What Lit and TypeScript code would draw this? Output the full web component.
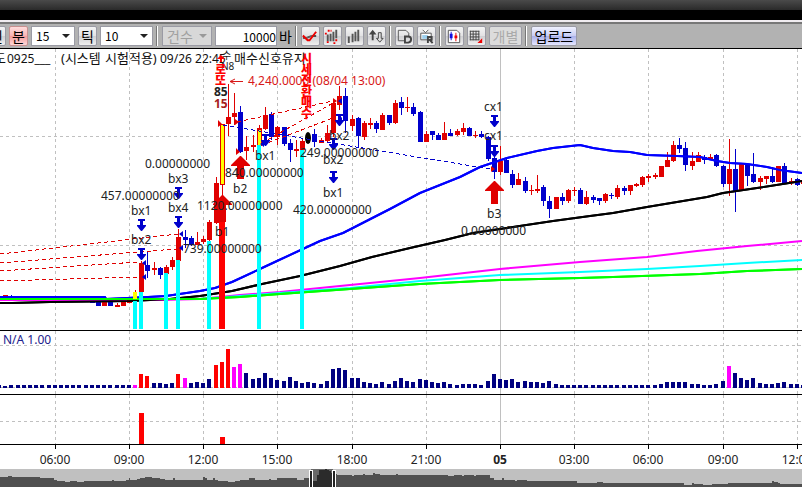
import { LitElement, css, html, svg } from "lit";
import { customElement } from "lit/decorators.js";

/** x of the n-th 15-minute bar; bar 0 is 06:00. */
const barX = (i: number) => Math.floor(55.25 + 6.183 * i);

// index, colour, body top, body bottom, wick top, wick bottom
type Candle = [number, "r" | "b", number, number, number, number];
const CANDLES: Candle[] = [
  [-8, "r", 295, 297, 295, 297], [-7, "b", 296, 298, 295, 298], [-5, "r", 296, 298, 296, 298],
  [-3, "r", 296, 298, 296, 298], [0, "r", 296, 298, 296, 298], [3, "r", 296, 298, 296, 298],
  [6, "b", 302, 303, 302, 303], [7, "b", 302, 306, 302, 306], [8, "r", 302, 306, 302, 306],
  [9, "b", 302, 306, 302, 306], [10, "r", 305, 307, 303, 307], [11, "r", 302, 306, 302, 306],
  [12, "r", 297, 303, 297, 303], [14, "r", 263, 292, 261, 292], [15, "b", 265, 271, 252, 278],
  [16, "r", 268, 270, 262, 275], [17, "b", 268, 275, 267, 279], [18, "r", 267, 274, 265, 274],
  [19, "r", 260, 267, 257, 270], [20, "r", 237, 261, 229, 261], [21, "b", 237, 240, 230, 248],
  [22, "b", 238, 245, 236, 246], [23, "r", 242, 245, 232, 245], [24, "r", 239, 242, 236, 244],
  [25, "r", 222, 240, 220, 241], [26, "r", 183, 223, 177, 224], [28, "r", 117, 124, 84, 136],
  [29, "r", 113, 117, 93, 125], [30, "b", 112, 152, 106, 153], [31, "r", 147, 151, 136, 160],
  [32, "r", 145, 147, 135, 152], [34, "r", 115, 129, 107, 130], [35, "b", 114, 137, 112, 140],
  [36, "r", 127, 137, 126, 145], [37, "b", 127, 144, 127, 146], [38, "b", 143, 150, 139, 162],
  [39, "r", 149, 151, 140, 157], [40, "r", 141, 150, 138, 150], [42, "b", 134, 142, 129, 147],
  [43, "r", 140, 143, 138, 143], [44, "r", 133, 141, 125, 142], [45, "r", 103, 133, 101, 137],
  [46, "r", 96, 105, 86, 110], [47, "b", 96, 121, 88, 133], [48, "r", 119, 126, 115, 131],
  [49, "b", 118, 136, 117, 148], [50, "r", 123, 137, 121, 140], [51, "r", 123, 125, 118, 129],
  [52, "b", 123, 129, 121, 133], [53, "r", 115, 130, 113, 130], [54, "b", 115, 123, 115, 125],
  [55, "r", 103, 123, 100, 124], [56, "b", 102, 108, 97, 115], [57, "r", 107, 108, 97, 112],
  [58, "b", 107, 114, 103, 116], [59, "b", 112, 142, 111, 142], [60, "r", 134, 142, 131, 142],
  [61, "b", 131, 135, 131, 140], [62, "b", 135, 140, 133, 140], [63, "r", 133, 140, 122, 140],
  [64, "b", 133, 136, 129, 136], [65, "r", 131, 135, 129, 136], [66, "r", 128, 132, 123, 135],
  [67, "b", 128, 136, 127, 136], [68, "r", 135, 136, 131, 138], [69, "b", 134, 137, 131, 138],
  [70, "b", 137, 159, 136, 161], [71, "b", 158, 172, 157, 179], [72, "r", 161, 172, 146, 175],
  [73, "b", 160, 173, 158, 173], [74, "b", 174, 185, 170, 188], [75, "r", 179, 185, 173, 185],
  [76, "b", 181, 191, 177, 193], [77, "r", 190, 191, 185, 195], [78, "r", 189, 191, 175, 193],
  [79, "b", 187, 201, 185, 206], [80, "b", 201, 209, 196, 218], [81, "r", 197, 209, 197, 209],
  [82, "b", 197, 201, 193, 205], [83, "r", 190, 201, 189, 203], [84, "r", 190, 191, 187, 196],
  [85, "b", 190, 204, 188, 204], [86, "r", 197, 204, 191, 205], [87, "b", 197, 200, 195, 203],
  [88, "b", 198, 201, 198, 205], [89, "r", 194, 201, 193, 203], [90, "b", 195, 196, 193, 199],
  [91, "r", 188, 197, 185, 199], [92, "b", 188, 191, 186, 195], [93, "r", 185, 191, 185, 195],
  [94, "r", 184, 186, 183, 187], [95, "r", 177, 185, 176, 187], [96, "r", 176, 178, 174, 182],
  [97, "r", 175, 177, 173, 179], [98, "r", 166, 177, 166, 177], [99, "r", 160, 167, 152, 167],
  [100, "r", 145, 161, 141, 162], [101, "b", 145, 149, 138, 153], [102, "b", 148, 165, 142, 171],
  [103, "r", 161, 166, 152, 170], [104, "r", 155, 162, 152, 162], [105, "b", 157, 160, 155, 164],
  [106, "r", 157, 159, 154, 160], [107, "b", 155, 166, 154, 167], [108, "b", 166, 184, 165, 187],
  [109, "r", 169, 184, 139, 196], [110, "b", 169, 191, 149, 212], [111, "r", 164, 190, 163, 190],
  [112, "b", 165, 176, 164, 186], [113, "b", 174, 182, 153, 183], [114, "r", 178, 182, 176, 190],
  [115, "r", 176, 179, 176, 184], [116, "b", 176, 182, 167, 183], [117, "r", 166, 182, 166, 182],
  [118, "b", 166, 183, 163, 184], [119, "r", 181, 182, 178, 185], [120, "b", 179, 185, 178, 186],
  [121, "r", 180, 184, 180, 184],
];

// bar heights, starting with bar -9
const VOLUME = [
  3, 2, 3, 3, 3, 3, 3, 3, 3, 3, 3, 3, 3, 3, 3, 3, 3, 3, 3, 3, 3, 3, 3, 14, 12, 5, 5, 4, 5, 14, 10, 5, 6, 5, 9,
  23, 26, 39, 21, 24, 15, 9, 10, 15, 10, 8, 7, 11, 7, 5, 6, 5, 4, 7, 19, 20, 18, 10, 10, 6, 5, 4, 6, 4, 7, 10,
  7, 6, 9, 8, 6, 5, 6, 4, 3, 4, 4, 4, 3, 7, 14, 9, 8, 9, 6, 7, 6, 6, 5, 7, 4, 3, 3, 3, 3, 3, 3, 3, 3, 3, 3, 3,
  3, 3, 3, 3, 3, 4, 6, 6, 6, 6, 4, 4, 3, 3, 4, 7, 22, 15, 10, 8, 10, 5, 4, 4, 5, 6, 4, 4, 3,
];
const RED_VOLUME = new Set([14, 15, 20, 26, 27, 28]);
const PINK_VOLUME = new Set([13, 21, 29, 30, 109]);
const volumeFill = (i: number) => (RED_VOLUME.has(i) ? "#ff0000" : PINK_VOLUME.has(i) ? "#ff00ff" : "#000080");

const AVERAGES: [string, string][] = [
  ["#000000", "0,303 12,303 50,302 130,301 170,299 200,296 232,291 262,284 300,276 340,266 372,257 410,248 445,240 473,233 513,227 553,221 590,216 613,213 647,207 677,202 707,197 723,193 757,188 802,181"],
  ["#0000ff", "0,297 105,297 106,299 148,297 166,296 200,291 215,288 232,282 262,268 277,261 305,248 320,241 343,233 390,209 420,193 460,177 480,167 507,158 537,151 553,148 580,145 593,148 613,151 630,152 647,155 677,156 700,157 717,161 730,163 747,164 767,167 780,170 802,173"],
  ["#ff00ff", "0,300 160,300 200,299 240,295 280,292 350,285 420,278 500,269 580,262 647,257 697,251 747,246 802,241"],
  ["#00ffff", "200,299 240,296 280,293 350,288 420,281 500,275 580,272 647,269 700,266 747,263 802,260"],
  ["#00ff00", "0,299 200,299 240,297 280,294 350,289 420,284 500,280 580,278 613,277 700,274 747,271 802,269"],
];

const HOURS: [number, string][] = [
  [55, "06:00"], [129, "09:00"], [203, "12:00"], [277, "15:00"], [352, "18:00"], [426, "21:00"],
  [500, "05"], [574, "03:00"], [648, "06:00"], [723, "09:00"], [797, "12:00"],
];

const BANDS: [number, number][] = [[133, 301], [139, 292], [164, 273], [176, 260], [207, 241], [257, 145], [300, 150]];
const DOWN: [number, number][] = [
  [141, 219], [141, 248], [178, 187], [178, 216], [265, 134], [339, 114], [333, 138], [333, 171], [494, 115], [494, 145],
];
const UP: [number, number, number][] = [[222, 195, 222], [240, 156, 179], [494, 181, 204]];

// x, baseline, text
const LABELS: [number, number, string][] = [
  [145, 168, "0.00000000"], [168, 183, "bx3"], [101, 200, "457.00000000"], [168, 212, "bx4"],
  [131, 215, "bx1"], [131, 244, "bx2"], [183, 253, "739.00000000"], [197, 210, "1120.00000000"],
  [225, 177, "840.00000000"], [233, 193, "b2"], [215, 236, "b1"], [255, 160, "bx1"],
  [329, 140, "bx2"], [300, 157, "249.00000000"], [323, 164, "bx2"], [323, 197, "bx1"],
  [293, 214, "420.00000000"], [484, 111, "cx1"], [484, 140, "cx1"], [487, 218, "b3"], [461, 235, "0.00000000"],
];

const RED_LINKS = [
  "M0 254L178 234", "M0 263L176 249", "M0 271L138 262", "M0 281L137 277",
  "M237 122L333 101", "M262 143L333 103", "M262 145L333 118",
];
const BLUE_LINKS = ["M223 125L313 140", "M320 141L490 169"];

const gridColumns = (top: number, bottom: number) =>
  HOURS.map(([x, t]) => svg`<path class=${t === "05" ? "day" : "grid"} d="M${x + 0.5} ${top}V${bottom}"/>`);

@customElement("price-chart")
class PriceChart extends LitElement {
  static styles = css`
    :host { display: block; background: #fff; }
    svg { display: block; width: 100%; height: auto; }
    text { font-family: "Noto Sans", "Noto Sans CJK KR", sans-serif; font-size: 12px; fill: #222; }
    .grid { stroke: #c0c0c0; stroke-dasharray: 3 3; fill: none; }
    .day { stroke: #c0c0c0; fill: none; }
    .frame { stroke: #000; fill: none; }
    .average { fill: none; stroke-width: 2; stroke-linejoin: round; shape-rendering: geometricPrecision; }
    .crisp { shape-rendering: crispEdges; }
    .link { fill: none; stroke-dasharray: 4 3; }
    .title { font-size: 13px; fill: #111; }
    .latin { font-size: 12px; }
    .high { fill: #d81818; }
    .bold { font-weight: 700; }
    .small { font-size: 10px; }
    .brown { fill: #a52020; }
    .signal { font-size: 12px; font-weight: 900; fill: #f00; }
    .study { fill: #20208c; }
    .middle { text-anchor: middle; }
  `;

  private prices() {
    return svg`
      <g class="crisp">
        ${gridColumns(49, 330)}
        <path class="grid" d="M0 136.5H802M0 245.5H802"/>
        ${AVERAGES.map(([c, p]) => svg`<polyline class="average" stroke=${c} points=${p}/>`)}
        ${CANDLES.map(([i, c, top, bottom, high, low]) => {
          const x = barX(i);
          return svg`<path fill=${c === "r" ? "#e00000" : "#0000cc"}
            d="M${x - 2} ${top}h5V${bottom}h-5zM${x} ${high}h1V${low}h-1z"/>`;
        })}
        ${AVERAGES.slice(0, 2).map(([c, p]) => svg`<polyline class="average" stroke=${c} points=${p}/>`)}
        ${AVERAGES.slice(4).map(([c, p]) => svg`<polyline class="average" stroke=${c} points=${p}/>`)}
        <path fill="#e00000" d="M135 290h1v9h-1zM220 124h5v61h-5zM222 184h1v14h-1zM257 128h5v18h-5zM259 125h1v4h-1z"/>
        <path fill="#ffff00" d="M133 292h4v7h-4zM221 125h3v59h-3zM258 130h3v15h-3z"/>
        ${BANDS.map(([x, y]) => svg`<rect fill="#00ffff" x=${x} y=${y} width="4" height=${329 - y}/>`)}
        <rect fill="#ff0000" x="219" y="222" width="6" height="107"/>
      </g>
      <ellipse cx="308" cy="138" rx="3" ry="6"/>
      <g class="crisp">
        ${RED_LINKS.map((d) => svg`<path class="link" stroke="#e00000" d=${d}/>`)}
        ${BLUE_LINKS.map((d) => svg`<path class="link" stroke="#0000cc" d=${d}/>`)}
      </g>
      ${DOWN.map(([x, y]) => svg`<path fill="#0000cc"
        d="M${x - 3} ${y}h7v2h-2v4h3v1l-4 5h-1l-4 -5v-1h3v-4h-2z"/>`)}
      ${UP.map(([x, y, end]) => svg`<path fill="#e00000"
        d="M${x} ${y}h1l9 9v1h-6V${end}h-7V${y + 10}h-6v-1z"/>`)}
      <path fill="#0000cc" d="M146 260v6l-4-3zM146 274v6l-4-3zM183 231v6l-4-3zM183 245v6l-4-3zM342 98v6l-4-3zM342 117v6l-4-3zM264 141v6l-4-3z"/>
      <path fill="#e00000" d="M218 120v7l4-3zM236 148v7l4-3zM491 166v6l4-3zM333 98v6l4-3zM235 119v6l4-3z"/>
      ${LABELS.map(([x, y, t]) => svg`<text x=${x} y=${y}>${t}</text>`)}
      <text class="title" x="-6" y="63">도<tspan class="latin" x="7">0925___</tspan><tspan x="61">(시스템</tspan><tspan x="105">시험적용)</tspan><tspan class="latin" x="160">09/26 22:45</tspan><tspan x="234">매수신호유지</tspan></text>
      <text class="small" x="222" y="59">수</text>
      <text class="small" x="221" y="70">N8</text>
      <path d="M243 81.500H230M235 79L230 81.500L235 84" fill="none" stroke="#d81818"/>
      <text class="high" x="248" y="85">4,240.0000 (08/04 13:00)</text>
      ${["로", "또"].map((t, i) => svg`<text class="signal" x="215" y=${74 + i * 11}>${t}</text>`)}
      <path fill="#ff0000" d="M221 55l4 4h-3v3h-2v-3h-3z"/>
      <text class="bold" x="214" y="96">85</text>
      <text class="bold brown" x="214" y="108">15</text>
      ${[..."시세전환매수"].map((t, i) => svg`<text class="signal" x="301" y=${63 + i * 11}>${t}</text>`)}
    `;
  }

  private volume() {
    return svg`
      <g class="crisp">
        <path class="frame" d="M0 330.5H802M0 394.5H802"/>
        ${gridColumns(331, 394)}
        <path class="grid" d="M0 345.5H802M0 387.5H802"/>
        ${VOLUME.map((h, n) => svg`<rect fill=${volumeFill(n - 9)} x=${barX(n - 9) - 2} y=${388 - h} width="4" height=${h}/>`)}
      </g>
      <text class="study" x="3" y="344">N/A 1.00</text>
    `;
  }

  private signals() {
    return svg`
      <g class="crisp">
        ${gridColumns(395, 444)}
        <path class="grid" d="M0 421.5H802"/>
        <path fill="#ff0000" d="M139 413h5v31h-5zM220 437h5v7h-5z"/>
        <path class="frame" d="M0 444.5H802"/>
        ${HOURS.map(([x]) => svg`<path class="frame" d="M${x + 0.5} 445v4"/>`)}
      </g>
      ${HOURS.map(([x, t]) => svg`<text class=${t === "05" ? "middle bold" : "middle"} x=${x} y="464">${t}</text>`)}
    `;
  }

  render() {
    return html`
      <svg viewBox="0 49 802 281" role="img" aria-label="가격">${this.prices()}</svg>
      <svg viewBox="0 330 802 65" role="img" aria-label="거래량">${this.volume()}</svg>
      <svg viewBox="0 395 802 74" role="img" aria-label="신호">${this.signals()}</svg>
    `;
  }
}

@customElement("range-navigator")
class RangeNavigator extends LitElement {
  static styles = css`
    :host { display: block; background: #c0c0c0; }
    svg { display: block; width: 100%; height: auto; shape-rendering: crispEdges; }
  `;

  render() {
    return html`<svg viewBox="0 469 802 18" role="img" aria-label="전체 기간">
      <path fill="#505050" d="M0 487V477H8V476H12V477H40V478H54V480H57V481H65V482H70V481H77V482H84V481H112V480H114V481H126V480H129V478H130V480H137V479H140V478H145V477H152V478H160V479H165V480H173V478H175V480H203V477H205V478H207V480H213V478H215V480H218V481H228V482H235V481H240V480H249V478H255V480H269V479H271V480H277V478H297V480H304V478H309V475H336V474H337V475H352V476H354V475H363V474H365V475H373V473H375V474H380V475H396V474H398V475H448V476H454V475H462V476H464V475H474V476H476V475H490V478H494V480H502V478H504V480H515V481H517V480H527V481H577V483H597V482H603V483H684V485H692V483H694V484H703V485H712V484H728V483H772V481H774V482H778V483H780V484H802V487Z"/>
      <rect x="311" y="469" width="22" height="18" fill="#686868"/>
      <path fill="#2b2b2b" d="M311 487V481H317V475H319V470H325V469H327V470H329V471H331V473H333V487Z"/>
      <path fill="#222" stroke="#fff" d="M309.500 470.500h3v20h-3zM332.500 470.500h3v20h-3z"/>
    </svg>`;
  }
}

const ICONS = {
  cross: svg`<path d="M2 11h4l5-2h5M2 12h4l5-2h5" fill="none" stroke="#444" stroke-width="1"/><path d="M2 9l5 5h2l7-9" fill="none" stroke="#e00" stroke-width="2"/>`,
  marked: svg`<path d="M4 8h2v7H4zM7 7h2v8H7zM10 5h2v10h-2zM13 3h2v9h-2z" fill="#555"/><path d="M5 3h2v2H5zM2 6h2v2H2zM8 3h1v2H8zM4 15h2v2H4zM11 16h2v2h-2zM13 13h2v2h-2z" fill="#e00"/>`,
  bars: svg`<path d="M3 10h2v7H3zM7 7h2v9H7zM10 5h2v10h-2zM13 3h2v12h-2z" fill="#555"/>`,
  swap: svg`<path d="M6 3l4 5H7v6H5V8H2z" fill="#444"/><path d="M12 6h3v6h2l-3.500 4L10 12h2z" fill="#ddd" stroke="#444"/>`,
  doc: svg`<path d="M3.500 3.500h8l3 3v3M3.500 3.500v11h6" fill="none" stroke="#555"/><path d="M10.500 10h3.500q3 0 3 3t-3 3.500h-3.500z" fill="none" stroke="#444" stroke-width="2"/>`,
  tv: svg`<path d="M6 3l3 3 3-3M4 6.500h11v7H4z" fill="#fff" stroke="#555"/><path d="M5.500 8.500h6v4h-6z" fill="#9cd0ee"/><path d="M11.500 17v-6.500h4v3h-4m2 0l3 3.500" fill="none" stroke="#444" stroke-width="2"/>`,
  candles: svg`<path d="M3.500 3.500h9l3 3v10h-12z" fill="#fff" stroke="#555"/><path d="M5 7h3v5H5zM6 5h1v9H6z" fill="#1010e0"/><path d="M10 9h3v3h-3zM11 6h1v9h-1z" fill="#e00"/>`,
  table: svg`<path d="M3.500 4v10M6.500 4v10M9.500 4v10M12.500 4v10M3 4.500h10M3 7.500h10M3 10.500h10M3 13.500h10" fill="none" stroke="#444"/><path d="M16 12v5h-5z" fill="#e00"/>`,
};

@customElement("app-root")
class AppRoot extends LitElement {
  static styles = css`
    :host { display: block; background: #fff; overflow: hidden; font-family: "Noto Sans CJK KR", sans-serif; font-size: 14px; }
    .caption { height: 20px; background: linear-gradient(#4a4a4a, #2a2a2a 10px, #000 10px); }
    .toolbar {
      display: flex; align-items: center; gap: 3px; height: 29px; box-sizing: border-box; overflow: hidden;
      border-top: 2px solid #f0ecf0; border-bottom: 1px solid #000;
      background: linear-gradient(#777 2px, #b2b2b2 2px); padding-top: 2px;
    }
    button, select, input { box-sizing: border-box; height: 20px; margin: 0; padding: 0; font: inherit; line-height: 18px; color: #000; border: 1px solid #9a9aa4; border-radius: 0; flex: none; }
    button { display: flex; align-items: center; justify-content: center; width: 19px; border-radius: 2px; background: linear-gradient(#f4f4f4, #e2e2e4 50%, #cfcfd2 50%, #efefef); }
    button svg { width: 18px; height: 18px; flex: none; }
    .cut { margin-left: -13px; }
    .on { background: linear-gradient(#ffdcdc, #f9b4b4 50%, #f49a9a 50%, #ffd8d8); border-color: #c89090; }
    .wide { width: 33px; }
    .upload { width: 46px; background: linear-gradient(#f0f2ff, #c8ccf4 50%, #a8aee8 50%, #e4e6ff); }
    button:disabled { color: #aaa; background: #dcdcdc; }
    .pick { position: relative; display: flex; flex: none; }
    .pick::after { content: ""; position: absolute; right: 5px; top: 8px; border: 4px solid transparent; border-top-color: #222; border-bottom: 0; pointer-events: none; }
    .pick select { width: 44px; padding-left: 4px; appearance: none; background: #fff; opacity: 1; font-size: 12px; }
    .pick .medium { width: 50px; font-size: 14px; }
    .pick .broad { width: 53px; }
    .pick select:disabled { background: #d8d8d8; color: #a0a0a0; }
    .dim::after { border-top-color: #999; }
    .count { width: 62px; text-align: right; background: #fff; font-size: 12px; }
    .unit { display: flex; align-items: center; gap: 2px; line-height: 20px; }
    .rule { width: 2px; height: 20px; flex: none; background: linear-gradient(90deg, #777 1px, #fff 1px); margin-right: 1px; }
  `;

  private tool(name: keyof typeof ICONS, label: string) {
    return html`<button aria-label=${label}><svg viewBox="0 0 19 19">${ICONS[name]}</svg></button>`;
  }

  render() {
    return html`
      <div class="caption"></div>
      <div class="toolbar">
        <button class="cut">인</button>
        <button class="on">분</button>
        <span class="pick"><select aria-label="분"><option>15</option></select></span>
        <button>틱</button>
        <span class="pick"><select class="broad" aria-label="틱"><option>10</option></select></span>
        <span class="rule"></span>
        <span class="pick dim"><select class="medium" aria-label="건수" disabled><option>건수</option></select></span>
        <label class="unit"><input class="count" value="10000">바</label>
        <span class="rule"></span>
        ${this.tool("cross", "추세")} ${this.tool("marked", "신호")} ${this.tool("bars", "막대")} ${this.tool("swap", "전환")}
        <span class="rule"></span>
        ${this.tool("doc", "문서")} ${this.tool("tv", "실시간")}
        <span class="rule"></span>
        ${this.tool("candles", "차트")} ${this.tool("table", "표")}
        <button class="wide" disabled>개별</button>
        <span class="rule"></span>
        <button class="upload">업로드</button>
      </div>
      <price-chart></price-chart>
      <range-navigator></range-navigator>
    `;
  }
}
